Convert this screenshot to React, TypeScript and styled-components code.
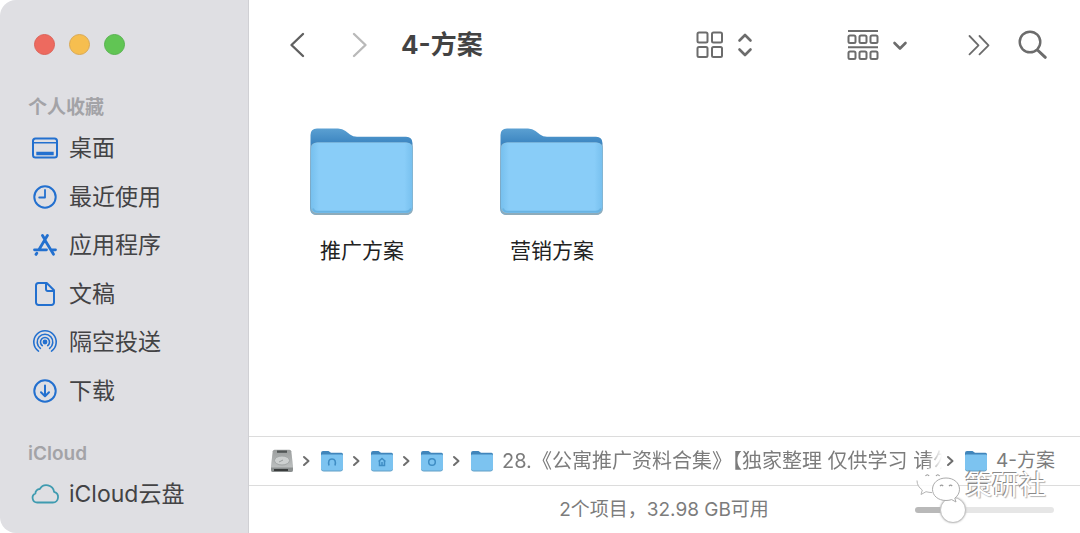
import React from 'react';
import styled, { createGlobalStyle } from 'styled-components';

const GlobalStyle = createGlobalStyle`
  * { box-sizing: border-box; }
  body {
    margin: 0;
    background: #fff;
    color: #434345;
    font-family: Inter, "Noto Sans CJK SC", sans-serif;
  }
  button { font: inherit; color: inherit; background: none; border: 0; padding: 0; }
  ul, ol { list-style: none; margin: 0; padding: 0; }
  h1, h2 { margin: 0; }
  svg { display: block; flex: none; }
`;

const Window = styled.div`
  display: flex;
  min-height: 100vh;
  border-radius: 16px;
  overflow: hidden;
`;

const Sidebar = styled.nav`
  flex: none;
  width: 249px;
  padding: 34px 0 14px 28px;
  background: #dfdfe3;
  border-right: 1px solid #d0d0d4;
`;

const Lights = styled.div`
  display: flex;
  gap: 14px;
  padding-left: 6px;
  margin-bottom: 41px;
`;

const Light = styled.button<{ $fill: string; $edge: string }>`
  width: 21px;
  height: 21px;
  border-radius: 50%;
  background: ${(p) => p.$fill};
  border: 1px solid ${(p) => p.$edge};
`;

const GroupTitle = styled.h2`
  font-size: 19px;
  line-height: 24px;
  font-weight: 600;
  color: #a3a3a7;
  margin-bottom: 4px;
`;

const Places = styled.ul<{ $height: number }>`
  display: grid;
  grid-auto-rows: 1fr;
  height: ${(p) => p.$height}px;
  margin-bottom: 27px;

  &:last-child { margin-bottom: 0; }
`;

const Place = styled.a`
  display: flex;
  align-items: center;
  gap: 9px;
  height: 100%;
  padding-left: 2px;
  font-size: 23px;
  line-height: 30px;
  color: #434345;
  text-decoration: none;
  white-space: nowrap;
`;

const Main = styled.main`
  flex: 1;
  min-width: 0;
  display: flex;
  flex-direction: column;
  background: #fff;
`;

const Toolbar = styled.header`
  display: flex;
  align-items: center;
  height: 89px;
  padding: 0 32px 0 40px;
`;

const Nav = styled.div`
  display: flex;
  gap: 47px;
  margin-right: 33px;
`;

const Tools = styled.div`
  display: flex;
  align-items: center;
  margin-left: auto;
`;

const ToolButton = styled.button<{ $after?: number }>`
  display: flex;
  align-items: center;
  gap: 13px;
  color: #6c6c6c;
  margin-right: ${(p) => p.$after ?? 0}px;
`;

const Title = styled.h1`
  font-size: 26px;
  line-height: 32px;
  font-weight: 700;
  color: #434343;
  white-space: nowrap;
`;

const Files = styled.section`
  flex: 1;
  display: flex;
  flex-wrap: wrap;
  align-content: flex-start;
  padding: 37px 18px;
`;

const Tile = styled.button`
  display: flex;
  flex-direction: column;
  align-items: center;
  gap: 18px;
  width: 190px;
  font-size: 21px;
  line-height: 30px;
  color: #222;
`;

const PathBar = styled.ol`
  display: flex;
  align-items: center;
  height: 50px;
  padding: 0 25px 0 21px;
  border-top: 1px solid #dcdcdc;
  border-bottom: 1px solid #dcdcdc;
  font-size: 20px;
  line-height: 28px;
  color: #7c7c7c;
`;

const Crumb = styled.li<{ $grow?: boolean }>`
  display: flex;
  align-items: center;
  min-width: 0;
  flex: ${(p) => (p.$grow ? '1 1 0' : 'none')};

  &:last-child { font-size: 19px; }
`;

const CrumbLink = styled.a`
  display: flex;
  align-items: center;
  gap: 8px;
  min-width: 0;
  color: inherit;
  text-decoration: none;
  white-space: nowrap;
`;

const CrumbText = styled.span<{ $fade?: boolean }>`
  overflow: hidden;
  ${(p) => p.$fade && 'mask-image: linear-gradient(to left, transparent, #000 16px);'}
`;

const Separator = styled.span<{ $tight?: boolean }>`
  flex: none;
  margin: 0 10px 0 ${(p) => (p.$tight ? 4 : 8)}px;
`;

const StatusBar = styled.footer`
  position: relative;
  display: grid;
  grid-template-columns: 1fr auto 1fr;
  align-items: center;
  height: 47px;
  padding: 0 26px 0 25px;
  font-size: 19px;
  line-height: 28px;
  color: #7c7c7c;
`;

const StatusText = styled.span`
  grid-column: 2;
  white-space: nowrap;
`;

const SizeSlider = styled.input`
  appearance: none;
  justify-self: end;
  width: 139px;
  height: 26px;
  margin: 0;
  background: transparent;

  &::-webkit-slider-runnable-track {
    height: 6px;
    border-radius: 3px;
    background: linear-gradient(to right, #b9b9b9 36px, #e6e6e6 36px);
  }

  &::-webkit-slider-thumb {
    appearance: none;
    width: 26px;
    height: 26px;
    margin-top: -10px;
    border-radius: 50%;
    background: #fff;
    border: 1px solid #c2c2c2;
    box-shadow: 0 0 2px #b5b5b5;
  }
`;

const Watermark = styled.div`
  position: absolute;
  right: 34px;
  top: -20px;
  display: flex;
  align-items: center;
  gap: 4px;
  font-size: 27px;
  line-height: 36px;
  color: #fff;
  text-shadow: -1px -1px 0 #8a8a8a, 1px 1px 1px #b4b4b4;
  pointer-events: none;
`;

const BLUE = '#2370cf';

function LineIcon({ children, color = BLUE, w = 30, h = 30, stroke = 2 }: {
  children: React.ReactNode; color?: string; w?: number; h?: number; stroke?: number;
}) {
  return (
    <svg width={w} height={h} viewBox={`0 0 ${w} ${h}`} fill="none" stroke={color}
      strokeWidth={stroke} strokeLinecap="round" strokeLinejoin="round" aria-hidden="true">
      {children}
    </svg>
  );
}

const places = [
  { name: '桌面', icon: (
    <LineIcon>
      <rect x="3" y="5.5" width="24" height="19" rx="2.5" />
      <path d="M3 9.8h24" strokeWidth="1.5" />
      <path d="M8 20.5h14" strokeWidth="3.4" strokeLinecap="square" />
    </LineIcon>
  ) },
  { name: '最近使用', icon: (
    <LineIcon><circle cx="15" cy="15" r="10.7" /><path d="M15 8v7.5H9.2" strokeWidth="1.8" /></LineIcon>
  ) },
  { name: '应用程序', icon: (
    <LineIcon stroke={2.8}>
      <path d="M12.5 5.5l2.4 4M17.4 5.5L9.2 19.2M15 10.2l8.500 14M4.500 19.800h12M21 19.800h4.500M6.800 23.200l-.8 1.200" />
    </LineIcon>
  ) },
  { name: '文稿', icon: (
    <LineIcon>
      <path d="M8.500 4h8.200L24 11.300v12.200a2.500 2.500 0 0 1-2.500 2.500h-13A2.500 2.500 0 0 1 6 23.500v-17A2.500 2.500 0 0 1 8.500 4zM16 4.300v6a1.700 1.700 0 0 0 1.700 1.700h6" />
    </LineIcon>
  ) },
  { name: '隔空投送', icon: (
    <LineIcon stroke={1.6}>
      <circle cx="15" cy="15" r="1.6" fill={BLUE} />
      <path d="M12.300 18.600a4.500 4.500 0 1 1 5.400 0M10.400 21.300a7.800 7.800 0 1 1 9.200 0M8.500 24.100a11.200 11.200 0 1 1 13 0" />
    </LineIcon>
  ) },
  { name: '下载', icon: (
    <LineIcon><circle cx="15" cy="15" r="10.700" /><path d="M15 9.500v10.500M11 16.300l4 4 4-4" /></LineIcon>
  ) },
];

function FolderArt() {
  return (
    <svg width="108" height="92" viewBox="0 0 108 92" aria-hidden="true">
      <defs>
        <linearGradient id="folderBack" x1="0" y1="0" x2="0" y2="1">
          <stop offset="0" stopColor="#5ba0d2" />
          <stop offset=".16" stopColor="#3e87c2" />
          <stop offset="1" stopColor="#5ba5d8" />
        </linearGradient>
        <linearGradient id="folderFront" x1="0" y1="0" x2="1" y2="0">
          <stop offset="0" stopColor="#77c0ee" />
          <stop offset=".08" stopColor="#89cdf8" />
          <stop offset=".92" stopColor="#89cdf8" />
          <stop offset="1" stopColor="#77c0ee" />
        </linearGradient>
      </defs>
      <path d="M2.500 12V9q0-6.500 6.500-6.500h21q4.500 0 7.500 2.500l4.500 3.500q3 2.300 7 2.300h49q6.500 0 6.500 6.500V82q0 7-7 7h-89q-6.500 0-6.500-7z" fill="url(#folderBack)" />
      <path d="M2.500 23q0-6.500 6.500-6.500h89.500q6.500 0 6.500 6.500v59q0 7-7 7H9q-6.500 0-6.500-7z" fill="#8eabba" />
      <path d="M3 23q0-6.500 6.500-6.500H98q6.500 0 6.500 6.500v57.500q0 6.500-6.500 6.500H9.500Q3 87 3 80.500z" fill="url(#folderFront)" />
      <path d="M5 82.500q1 3.300 5 3.300h87.500q4 0 5.500-3.300" fill="none" stroke="#69b3e2" strokeWidth="2" />
    </svg>
  );
}

function MiniFolder({ mark }: { mark?: React.ReactNode }) {
  return (
    <svg width="24" height="24" viewBox="0 0 24 24" aria-hidden="true">
      <path d="M1 4q0-2 2-2h5.500l2.500 1.800h10.500q1.500 0 1.500 1.700V20H1z" fill="#4085bb" />
      <path d="M1 6.500q0-1 1-1h20q1 0 1 1v13q0 2.500-2 2.500H3q-2 0-2-2.500z" fill="#7cc3f0" />
      <path d="M1.500 20.500q.5 1.500 2 1.500h17q1.500 0 2-1.500" fill="none" stroke="#639fc6" />
      <g fill="none" stroke="#3f8dc4" strokeWidth="1.500">{mark}</g>
    </svg>
  );
}

function Disk() {
  return (
    <svg width="24" height="24" viewBox="0 0 24 24" aria-hidden="true">
      <defs>
        <linearGradient id="diskTop" x1="0" y1="0" x2="0" y2="1">
          <stop offset="0" stopColor="#9b9e9e" />
          <stop offset="1" stopColor="#c4c7c7" />
        </linearGradient>
      </defs>
      <path d="M4.500.8h15q1.500 0 1.800 1.500L23 17v4q0 2-2 2H3q-2 0-2-2v-4L2.700 2.300Q3 .8 4.500.8z" fill="url(#diskTop)" />
      <path d="M7 1.500h10v2.300H7z" fill="#515555" />
      <ellipse cx="12" cy="11.500" rx="7.500" ry="4.500" fill="#cdd0d0" stroke="#a2a6a6" />
      <path d="M9 13l4-2" stroke="#9a9e9e" />
      <path d="M1 18.500h22V21q0 2-2 2H3q-2 0-2-2z" fill="#8b8f8f" />
      <path d="M4 21h14" stroke="#303333" strokeWidth="1.800" />
    </svg>
  );
}

const Arrow = ({ tight }: { tight?: boolean }) => (
  <Separator $tight={tight}>
    <LineIcon w={8} h={12} stroke={2} color="#6e6e6e"><path d="M2 2l4.500 4L2 10" /></LineIcon>
  </Separator>
);

function WeChat() {
  return (
    <svg width="46" height="40" viewBox="0 0 46 40" fill="#fff" aria-hidden="true">
      <path d="M18 2C9 2 2 7.500 2 14.500c0 4 2 7.200 5.300 9.500L6 28.500l5-2.800q3.500 1 7 1C27 26.700 33 21 33 14.500S27 2 18 2z" fillOpacity=".82" />
      <path d="M2 14.500c0 4 2 7.200 5.300 9.500L6 28.500l5-2.800q3 .8 6 .9" fill="none" stroke="#b5b5b5" />
      <path d="M31 12c-8 0-13.500 5-13.500 11.300S23 34.500 31 34.500q3 0 5.700-.9l4.300 2.400-1.200-3.900c3-2.200 4.700-5.200 4.700-8.800C44.500 17 39 12 31 12z" stroke="#ababab" />
      <g fill="none" stroke="#9b9b9b" strokeWidth="1.200">
        <path d="M10.500 10q1.800-2.500 3.600 0M21 10q1.800-2.500 3.600 0M25 20q1.600-1.800 3.200 0M34 20q1.600-1.800 3.200 0" />
      </g>
    </svg>
  );
}

const parents = [
  { name: '用户', mark: <path d="M9 16.500q-1.500-6.500 3-6.500t3 6.500" /> },
  { name: '个人', mark: <path d="M8.500 12.500l3.500-3 3.500 3M9.500 12v4.500h5V12M12 13v3" /> },
  { name: '下载', mark: <circle cx="12" cy="13" r="3.300" /> },
];

export default function App() {
  return (
    <>
      <GlobalStyle />
      <Window>
        <Sidebar aria-label="边栏">
          <Lights>
            <Light $fill="#ed6a5f" $edge="#dc6258" aria-label="关闭" />
            <Light $fill="#f6be4f" $edge="#d9a955" aria-label="最小化" />
            <Light $fill="#61c554" $edge="#58b350" aria-label="缩放" />
          </Lights>
          <GroupTitle>个人收藏</GroupTitle>
          <Places $height={291}>
            {places.map((p) => (
              <li key={p.name}><Place href="#">{p.icon}<span>{p.name}</span></Place></li>
            ))}
          </Places>
          <GroupTitle>iCloud</GroupTitle>
          <Places $height={48}>
            <li>
              <Place href="#">
                <LineIcon color="#3f9bb0" stroke={1.8}>
                  <path d="M7.500 23.500h15.300a5.400 5.400 0 0 0 1.300-10.600A7.700 7.700 0 0 0 9.800 10a4.300 4.300 0 0 0-4.400 4.500A4.700 4.700 0 0 0 7.500 23.500z" />
                </LineIcon>
                <span>iCloud云盘</span>
              </Place>
            </li>
          </Places>
        </Sidebar>
        <Main>
          <Toolbar>
            <Nav>
              <ToolButton aria-label="后退">
                <LineIcon w={16} h={26} color="#606060" stroke={2.4}><path d="M14 2L2.500 13 14 24" /></LineIcon>
              </ToolButton>
              <ToolButton aria-label="前进">
                <LineIcon w={16} h={26} color="#b9b9b9" stroke={2.4}><path d="M2 2l11.500 11L2 24" /></LineIcon>
              </ToolButton>
            </Nav>
            <Title>4-方案</Title>
            <Tools>
              <ToolButton $after={94} aria-label="图标显示">
                <LineIcon w={28} h={28} color="currentColor" stroke={2}>
                  <rect x="1.500" y="1.500" width="10" height="10" rx="1.500" />
                  <rect x="16" y="1.500" width="10" height="10" rx="1.500" />
                  <rect x="1.500" y="16" width="10" height="10" rx="1.500" />
                  <rect x="16" y="16" width="10" height="10" rx="1.500" />
                </LineIcon>
                <LineIcon w={16} h={26} color="currentColor" stroke={2.600}>
                  <path d="M2.500 8.500L8 3l5.500 5.500M2.500 17.500L8 23l5.500-5.500" />
                </LineIcon>
              </ToolButton>
              <ToolButton $after={59} aria-label="分组方式">
                <LineIcon w={32} h={32} color="currentColor" stroke={2}>
                  <path d="M1 2h30M1 18.300h30" strokeLinecap="butt" />
                  {[1.500, 12.500, 23.500].map((x) => (
                    <React.Fragment key={x}>
                      <rect x={x} y="6.500" width="7" height="7.500" rx="1.500" />
                      <rect x={x} y="22.500" width="7" height="7.500" rx="1.500" />
                    </React.Fragment>
                  ))}
                </LineIcon>
                <LineIcon w={16} h={12} color="currentColor" stroke={2.600}><path d="M2.500 4L8 9.500 13.500 4" /></LineIcon>
              </ToolButton>
              <ToolButton $after={27} aria-label="更多">
                <LineIcon w={24} h={22} color="currentColor" stroke={1.800}>
                  <path d="M2.500 2l9 9.300-9 9M12.500 2l9 9.300-9 9" />
                </LineIcon>
              </ToolButton>
              <ToolButton aria-label="搜索">
                <LineIcon w={30} h={30} color="currentColor" stroke={2.400}>
                  <circle cx="12" cy="12" r="10.300" />
                  <path d="M20 20.500l7.300 6.800" strokeWidth="3" />
                </LineIcon>
              </ToolButton>
            </Tools>
          </Toolbar>
          <Files>
            {['推广方案', '营销方案'].map((name) => (
              <Tile key={name}><FolderArt /><span>{name}</span></Tile>
            ))}
          </Files>
          <PathBar>
            <Crumb><CrumbLink href="#" aria-label="磁盘"><Disk /></CrumbLink><Arrow /></Crumb>
            {parents.map((p) => (
              <Crumb key={p.name}>
                <CrumbLink href="#" aria-label={p.name}><MiniFolder mark={p.mark} /></CrumbLink>
                <Arrow />
              </Crumb>
            ))}
            <Crumb $grow>
              <CrumbLink href="#">
                <MiniFolder />
                <CrumbText $fade>28.《公寓推广资料合集》【独家整理 仅供学习 请勿</CrumbText>
              </CrumbLink>
              <Arrow tight />
            </Crumb>
            <Crumb>
              <CrumbLink href="#"><MiniFolder /><CrumbText>4-方案</CrumbText></CrumbLink>
            </Crumb>
          </PathBar>
          <StatusBar>
            <StatusText>2个项目，32.98 GB可用</StatusText>
            <SizeSlider type="range" min="0" max="100" defaultValue="22" aria-label="图标大小" />
            <Watermark><WeChat /><span>策研社</span></Watermark>
          </StatusBar>
        </Main>
      </Window>
    </>
  );
}
